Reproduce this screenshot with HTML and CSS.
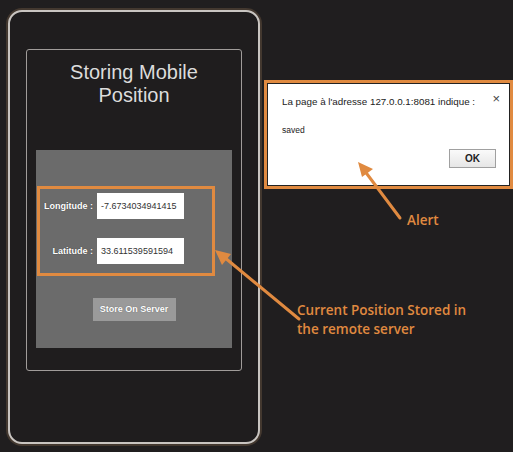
FILE: index.html
```html
<!DOCTYPE html>
<html>
<head>
<meta charset="utf-8">
<link rel="stylesheet" href="styles.css">
</head>
<body>
<div class="stage">
  <div class="phone">
    <div class="screen">
      <h1 class="title">Storing Mobile<br>Position</h1>
      <div class="panel">
        <div class="fields">
          <label class="lbl">Longitude :</label>
          <div class="input">-7.6734034941415</div>
          <label class="lbl">Latitude :</label>
          <div class="input">33.611539591594</div>
        </div>
        <div class="btn">Store On Server</div>
      </div>
    </div>
  </div>
  <div class="side">
    <div class="alert-frame">
      <div class="alert">
        <div class="alert-head">
          <span class="alert-msg">La page à l'adresse 127.0.0.1:8081 indique :</span>
          <span class="close">×</span>
        </div>
        <div class="alert-text">saved</div>
        <div class="alert-foot"><span class="ok">OK</span></div>
      </div>
    </div>
    <div class="note note-alert">Alert</div>
    <div class="note note-pos">Current Position Stored in<br>the remote server</div>
  </div>
</div>
<svg class="arrows" width="513" height="452" viewBox="0 0 513 452">
  <g stroke="#e08a40" stroke-width="3" stroke-linecap="round" fill="#e08a40">
    <line x1="400" y1="218" x2="364" y2="170"/>
    <polygon points="358,162 373,169 362,177" stroke="none"/>
    <line x1="299" y1="319" x2="224" y2="257"/>
    <polygon points="215,250 231,254 222,265" stroke="none"/>
  </g>
</svg>
</body>
</html>
```
FILE: styles.css
```css
html, body {
  margin: 0;
  padding: 0;
}
body {
  width: 513px;
  height: 452px;
  background: #201e1f;
  font-family: "Liberation Sans", Arial, sans-serif;
  position: relative;
  overflow: hidden;
}
.stage {
  display: flex;
  padding: 10px 0 0 8px;
  gap: 4px;
}
.phone {
  box-sizing: border-box;
  width: 252px;
  height: 434px;
  border: 2px solid #c9c5c1;
  border-radius: 14px;
  box-shadow: 0 0 0 2px #43382f;
  background: #1f1d1e;
  padding: 37px 0 0 16px;
}
.screen {
  box-sizing: border-box;
  width: 216px;
  height: 322px;
  border: 1px solid #a09c9a;
  border-radius: 3px;
  padding: 11px 0 0 9px;
}
.title {
  margin: 0 0 0 -9px;
  font-weight: normal;
  font-size: 20px;
  line-height: 23px;
  color: #dcdcdc;
  text-align: center;
}
.panel {
  margin-top: 43px;
  width: 196px;
  height: 198px;
  background: #6b6b6b;
  padding-top: 36px;
  box-sizing: border-box;
}
.fields {
  box-sizing: border-box;
  margin-left: 1px;
  width: 178px;
  border: 3px solid #e08a40;
  padding: 4px 0 9px 0;
  display: grid;
  grid-template-columns: 53px 87px;
  column-gap: 4px;
  row-gap: 19px;
  align-items: center;
}
.lbl {
  text-align: right;
  color: #fff;
  font-weight: bold;
  font-size: 9px;
  white-space: nowrap;
  text-shadow: 0 0 1px #333;
}
.input {
  height: 26px;
  background: #fff;
  color: #333;
  font-size: 9px;
  line-height: 26px;
  padding-left: 4px;
  box-sizing: border-box;
  white-space: nowrap;
  overflow: hidden;
}
.btn {
  margin: 22px auto 0;
  width: 83px;
  height: 23px;
  background: #9a9a9a;
  color: #fff;
  font-weight: bold;
  font-size: 9px;
  line-height: 23px;
  text-align: center;
  text-shadow: 0 0 1px #555;
}
.side {
  width: 249px;
  padding-top: 70px;
}
.alert-frame {
  box-sizing: border-box;
  width: 249px;
  height: 109px;
  border: 3px solid #e08a40;
  background: #222;
  padding: 1px;
}
.alert {
  background: #fff;
  height: 100%;
  box-sizing: border-box;
  padding: 11px 9px 0 14px;
  color: #222;
}
.alert-head {
  display: flex;
  justify-content: space-between;
  align-items: flex-start;
}
.alert-msg {
  font-size: 9.8px;
  line-height: 14px;
}
.close {
  font-size: 13px;
  line-height: 8px;
  color: #444;
}
.alert-text {
  margin-top: 15px;
  font-size: 8.5px;
  line-height: 12px;
}
.alert-foot {
  display: flex;
  justify-content: flex-end;
  margin-top: 13px;
  padding-right: 4px;
}
.ok {
  box-sizing: border-box;
  width: 47px;
  height: 19px;
  border: 1px solid #a0a0a0;
  background: linear-gradient(#fafafa, #e6e6e6);
  font-size: 10px;
  font-weight: bold;
  line-height: 17px;
  text-align: center;
}
.note {
  color: #e08a40;
  font-family: "Open Sans", sans-serif;
  font-weight: 600;
}
.note-alert {
  margin: 22px 0 0 143px;
  font-size: 13.5px;
  line-height: 18px;
}
.note-pos {
  margin: 72px 0 0 33px;
  font-size: 13.5px;
  line-height: 19px;
}
.arrows {
  position: absolute;
  left: 0;
  top: 0;
}
```
